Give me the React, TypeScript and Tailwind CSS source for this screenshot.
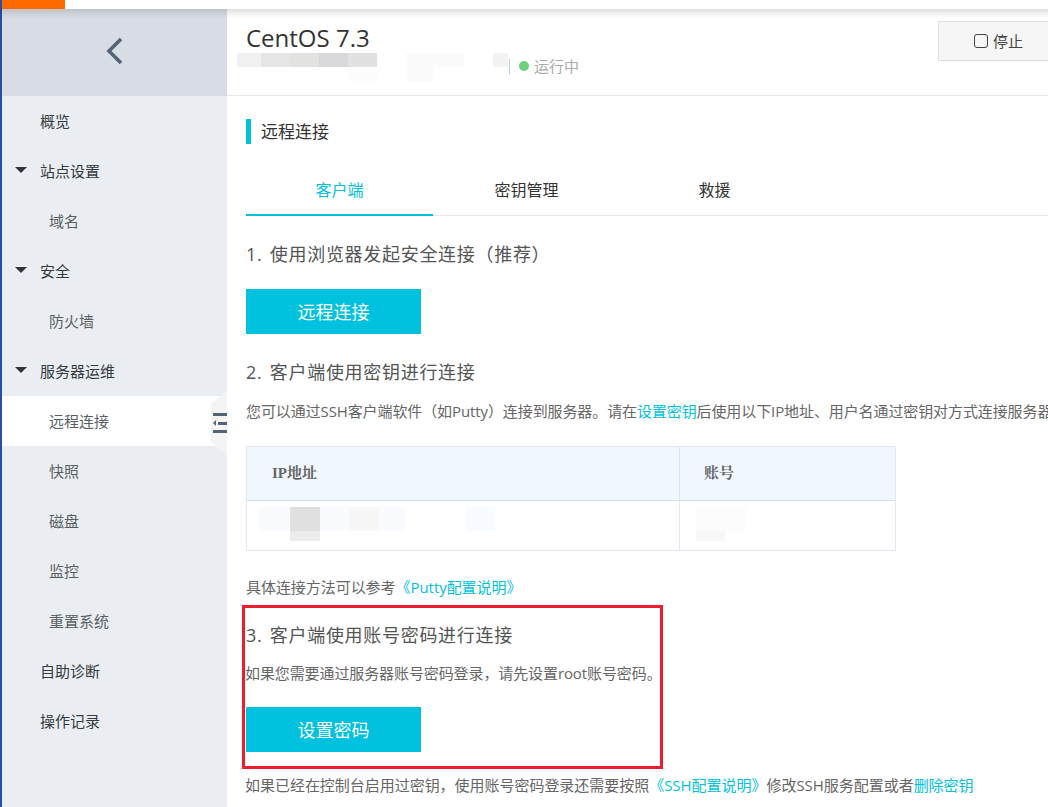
const font = { fontFamily: '"Open Sans","Noto Sans CJK SC",sans-serif' };

function Caret() {
  return <span className="absolute left-[13px] top-[21px] w-0 h-0 border-l-[6px] border-r-[6px] border-t-[6px] border-l-transparent border-r-transparent border-t-[#333]" />;
}

function Item({ label, sub, caret, active }: { label: string; sub?: boolean; caret?: boolean; active?: boolean }) {
  return (
    <div className={`relative h-[50px] flex items-center text-[15px] ${sub ? "pl-[47px] text-[#5a5f66]" : "pl-[38px] text-[#333a42]"} ${active ? "bg-white" : ""}`}>
      {caret && <Caret />}
      {label}
    </div>
  );
}

function Blur({ c, cls }: { c: string; cls: string }) {
  return <div className={`absolute ${c} ${cls}`} />;
}

function Heading({ n, children }: { n: string; children: React.ReactNode }) {
  return (
    <h2 className="text-[18px] leading-[26px] tracking-[0.7px] text-[#555]">
      <span className="mr-[2px]">{n}</span> {children}
    </h2>
  );
}

function Cyan({ children }: { children: React.ReactNode }) {
  return <button className="w-[175px] h-[45px] pt-[1px] bg-[#00c1de] text-white text-[18px] flex items-center justify-center">{children}</button>;
}

export default function App() {
  return (
    <div style={font} className="relative w-[1048px] h-[807px] overflow-hidden bg-white flex flex-col">
      <div className="h-[9px] bg-white flex shrink-0">
        <div className="w-[2px] bg-[#2a4f9e]" />
        <div className="w-[63px] bg-[#ff6a00]" />
      </div>
      <div className="flex flex-1 min-h-0">
        <div className="w-[2px] bg-[#2a4f9e]" />
        <aside className="w-[225px] bg-[#eaedf1] shrink-0 relative">
          <div className="h-[87px] bg-[#d8dde5] flex items-center justify-center">
            <svg width="22" height="28" viewBox="0 0 22 28" className="mt-[-3px] ml-[-2px]">
              <path d="M18 2 L6 14 L18 26" fill="none" stroke="#546478" strokeWidth="3.6" />
            </svg>
          </div>
          <Item label="概览" />
          <Item label="站点设置" caret />
          <Item label="域名" sub />
          <Item label="安全" caret />
          <Item label="防火墙" sub />
          <Item label="服务器运维" caret />
          <Item label="远程连接" sub active />
          <Item label="快照" sub />
          <Item label="磁盘" sub />
          <Item label="监控" sub />
          <Item label="重置系统" sub />
          <Item label="自助诊断" />
          <Item label="操作记录" />
          <div className="absolute left-[209px] top-[382px] w-[16px] h-[64px] bg-[#f4f4f5] [clip-path:polygon(100%_0,100%_100%,0_80%,0_20%)] flex flex-col justify-center gap-[4px] items-end">
            <div className="w-[14px] h-[3px] bg-[#546478]" />
            <div className="w-[14px] flex items-center justify-between">
              <span className="w-0 h-0 border-y-[3px] border-r-[3px] border-y-transparent border-r-[#546478]" />
              <span className="w-[9px] h-[3px] bg-[#546478]" />
            </div>
            <div className="w-[14px] h-[3px] bg-[#546478]" />
          </div>
        </aside>
        <main className="flex-1 min-w-0 relative">
          <div className="h-[87px] border-b border-[#e6e6e6] relative pl-[19px]">
            <div className="pt-[11px] text-[24px] leading-[36px] text-[#333]">CentOS 7.3</div>
            <Blur c="bg-[#f1f1f1]" cls="left-[10px] top-[44px] w-[24px] h-[14px]" />
            <Blur c="bg-[#e6e6e6]" cls="left-[34px] top-[44px] w-[29px] h-[14px]" />
            <Blur c="bg-[#e2e2e0]" cls="left-[63px] top-[44px] w-[29px] h-[14px]" />
            <Blur c="bg-[#d9d9dc]" cls="left-[92px] top-[44px] w-[29px] h-[14px]" />
            <Blur c="bg-[#e1e1e1]" cls="left-[121px] top-[44px] w-[29px] h-[14px]" />
            <Blur c="bg-[#fcfcfc]" cls="left-[121px] top-[58px] w-[29px] h-[14px]" />
            <Blur c="bg-[#fbfbfb]" cls="left-[179px] top-[44px] w-[58px] h-[14px]" />
            <Blur c="bg-[#fbfbfb]" cls="left-[179px] top-[58px] w-[28px] h-[14px]" />
            <Blur c="bg-[#f2f2f2]" cls="left-[266px] top-[44px] w-[15px] h-[14px]" />
            <div className="absolute left-[282px] top-[47px] flex items-center text-[15px] leading-[20px] text-[#aaa]">
              <span className="w-[1px] h-[15px] bg-[#b8cdee] mr-[9px]" />
              <span className="w-[10px] h-[10px] rounded-full bg-[#70cf7f] mr-[5px]" />
              <span>运行中</span>
            </div>
            <button className="absolute left-[711px] top-[12px] w-[120px] h-[40px] bg-[#f6f6f6] border border-[#dfdfdf] text-[15px] text-[#444] flex items-center pl-[35px] gap-[5px]">
              <span className="w-[14px] h-[14px] border-[1.5px] border-[#444] rounded-[3px]" />
              停止
            </button>
          </div>
          <div className="pl-[19px]">
            <div className="mt-[23px] h-[25px] flex items-center gap-[10px]">
              <span className="w-[5px] h-[25px] bg-[#00c1de]" />
              <span className="text-[17px] text-[#333]">远程连接</span>
            </div>
            <div className="mt-[21px] h-[51px] flex border-b border-[#e6e6e6] text-[16px] text-[#333]">
              <div className="w-[187px] h-[51px] pt-[1px] flex items-center justify-center text-[#00c1de] border-b-2 border-[#00c1de]">客户端</div>
              <div className="w-[187px] pb-[1px] flex items-center justify-center">密钥管理</div>
              <div className="w-[189px] pb-[1px] flex items-center justify-center">救援</div>
            </div>
            <div className="mt-[25px]"><Heading n="1.">使用浏览器发起安全连接（推荐）</Heading></div>
            <div className="mt-[22px]"><Cyan>远程连接</Cyan></div>
            <div className="mt-[25px]"><Heading n="2.">客户端使用密钥进行连接</Heading></div>
            <p className="mt-[16px] text-[15px] leading-[20px] tracking-[-0.1px] text-[#666] whitespace-nowrap">您可以通过SSH客户端软件（如Putty）连接到服务器。请在<span className="text-[#00c1de]">设置密钥</span>后使用以下IP地址、用户名通过密钥对方式连接服务器</p>
            <div className="mt-[25px] w-[650px] h-[105px] border border-[#e3e8ee] relative">
              <div className="h-[54px] bg-[#f0f7ff] border-b border-[#cfe4fb] flex text-[15px] font-bold text-[#666]" style={{ fontFamily: '"Liberation Serif","Noto Serif CJK SC","Noto Sans CJK SC",serif' }}>
                <div className="w-[433px] border-r border-[#d5e6f7] pl-[25px] flex items-center">IP地址</div>
                <div className="pl-[24px] flex items-center">账号</div>
              </div>
              <div className="h-[49px] flex">
                <div className="w-[433px] border-r border-[#e3e8ee]" />
              </div>
              <Blur c="bg-[#f9fbff]" cls="left-[12px] top-[60px] w-[146px] h-[24px]" />
              <Blur c="bg-[#e0e0e0]" cls="left-[43px] top-[60px] w-[30px] h-[24px]" />
              <Blur c="bg-[#ececec]" cls="left-[43px] top-[84px] w-[30px] h-[10px]" />
              <Blur c="bg-[#f7f7f7]" cls="left-[102px] top-[60px] w-[30px] h-[24px]" />
              <Blur c="bg-[#f8fbff]" cls="left-[219px] top-[60px] w-[29px] h-[24px]" />
              <Blur c="bg-[#fcfcfc]" cls="left-[449px] top-[60px] w-[50px] h-[24px]" />
              <Blur c="bg-[#f7f7f7]" cls="left-[449px] top-[84px] w-[29px] h-[10px]" />
            </div>
            <p className="mt-[26px] text-[15px] leading-[20px] tracking-[-0.05px] text-[#666]">具体连接方法可以参考<span className="text-[#00c1de]">《Putty配置说明》</span></p>
            <div className="mt-[25px]"><Heading n="3.">客户端使用账号密码进行连接</Heading></div>
            <p className="mt-[15px] ml-[-1px] text-[15px] leading-[20px] tracking-[-0.1px] text-[#666]">如果您需要通过服务器账号密码登录，请先设置root账号密码。</p>
            <div className="mt-[24px]"><Cyan>设置密码</Cyan></div>
            <p className="mt-[23px] ml-[-1px] text-[15px] leading-[20px] tracking-[-0.03px] text-[#666] whitespace-nowrap">如果已经在控制台启用过密钥，使用账号密码登录还需要按照<span className="text-[#00c1de]">《SSH配置说明》</span>修改SSH服务配置或者<span className="text-[#00c1de]">删除密钥</span></p>
          </div>
        </main>
      </div>
      <div className="absolute left-0 right-0 top-[9px] h-[9px] bg-gradient-to-b from-[#0000001f] to-transparent" />
      <div className="absolute left-[242px] top-[605px] w-[421px] h-[164px] border-[3px] border-[#ee1c2e]" />
    </div>
  );
}
